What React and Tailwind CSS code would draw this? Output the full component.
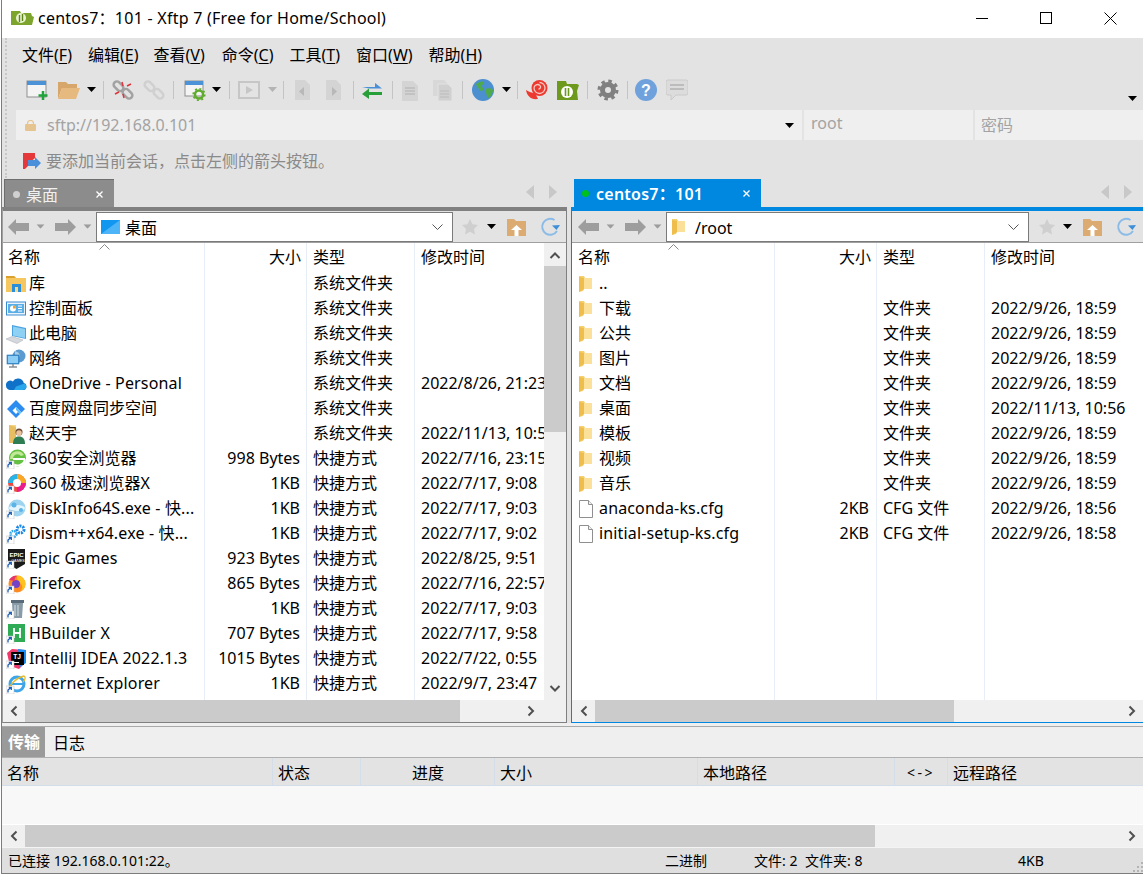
import React from 'react';

const leftRows = [
  { icon: 'library', name: '库', size: '', type: '系统文件夹', time: '' },
  { icon: 'panel', name: '控制面板', size: '', type: '系统文件夹', time: '' },
  { icon: 'pc', name: '此电脑', size: '', type: '系统文件夹', time: '' },
  { icon: 'network', name: '网络', size: '', type: '系统文件夹', time: '' },
  { icon: 'onedrive', name: 'OneDrive - Personal', size: '', type: '系统文件夹', time: '2022/8/26, 21:23' },
  { icon: 'baidu', name: '百度网盘同步空间', size: '', type: '系统文件夹', time: '' },
  { icon: 'user', name: '赵天宇', size: '', type: '系统文件夹', time: '2022/11/13, 10:56' },
  { icon: 'b360', name: '360安全浏览器', size: '998 Bytes', type: '快捷方式', time: '2022/7/16, 23:15' },
  { icon: 'x360', name: '360 极速浏览器X', size: '1KB', type: '快捷方式', time: '2022/7/17, 9:08' },
  { icon: 'disk', name: 'DiskInfo64S.exe - 快...', size: '1KB', type: '快捷方式', time: '2022/7/17, 9:03' },
  { icon: 'dism', name: 'Dism++x64.exe - 快...', size: '1KB', type: '快捷方式', time: '2022/7/17, 9:02' },
  { icon: 'epic', name: 'Epic Games', size: '923 Bytes', type: '快捷方式', time: '2022/8/25, 9:51' },
  { icon: 'firefox', name: 'Firefox', size: '865 Bytes', type: '快捷方式', time: '2022/7/16, 22:57' },
  { icon: 'geek', name: 'geek', size: '1KB', type: '快捷方式', time: '2022/7/17, 9:03' },
  { icon: 'hbuilder', name: 'HBuilder X', size: '707 Bytes', type: '快捷方式', time: '2022/7/17, 9:58' },
  { icon: 'idea', name: 'IntelliJ IDEA 2022.1.3', size: '1015 Bytes', type: '快捷方式', time: '2022/7/22, 0:55' },
  { icon: 'ie', name: 'Internet Explorer', size: '1KB', type: '快捷方式', time: '2022/9/7, 23:47' },
  { icon: 'purple', name: '', size: '', type: '', time: '' },
];

const rightRows = [
  { icon: 'folder', name: '..', size: '', type: '', time: '' },
  { icon: 'folder', name: '下载', size: '', type: '文件夹', time: '2022/9/26, 18:59' },
  { icon: 'folder', name: '公共', size: '', type: '文件夹', time: '2022/9/26, 18:59' },
  { icon: 'folder', name: '图片', size: '', type: '文件夹', time: '2022/9/26, 18:59' },
  { icon: 'folder', name: '文档', size: '', type: '文件夹', time: '2022/9/26, 18:59' },
  { icon: 'folder', name: '桌面', size: '', type: '文件夹', time: '2022/11/13, 10:56' },
  { icon: 'folder', name: '模板', size: '', type: '文件夹', time: '2022/9/26, 18:59' },
  { icon: 'folder', name: '视频', size: '', type: '文件夹', time: '2022/9/26, 18:59' },
  { icon: 'folder', name: '音乐', size: '', type: '文件夹', time: '2022/9/26, 18:59' },
  { icon: 'file', name: 'anaconda-ks.cfg', size: '2KB', type: 'CFG 文件', time: '2022/9/26, 18:56' },
  { icon: 'file', name: 'initial-setup-ks.cfg', size: '2KB', type: 'CFG 文件', time: '2022/9/26, 18:58' },
];

const Ic = ({ w = 22, h = 22, vb = '0 0 22 22', className = '', children }) => (
  <svg width={w} height={h} viewBox={vb} className={`shrink-0 ${className}`}>{children}</svg>
);

const Caret = ({ className = '', color = '#000' }) => (
  <svg width="9" height="5" viewBox="0 0 9 5" className={`shrink-0 ${className}`}><path d="M0 0h9L4.500 5z" fill={color} /></svg>
);

const Sep = ({ className = '' }) => <div className={`w-px h-[18px] bg-[#c4c4c4] shrink-0 ${className}`} />;

const Chevron = ({ dir, className = '' }) => (
  <svg width="10" height="12" viewBox="0 0 10 12" className={`shrink-0 ${className}`}>
    {dir === 'left' && <path d="M7.500 1.500 3 6l4.500 4.500" fill="none" stroke="#505050" strokeWidth="2" />}
    {dir === 'right' && <path d="M2.500 1.500 7 6l-4.500 4.500" fill="none" stroke="#505050" strokeWidth="2" />}
  </svg>
);

const Shortcut = () => (
  <g>
    <rect x="0" y="12" width="8" height="8" fill="#fff" stroke="#bbb" strokeWidth="0.5" />
    <path d="M2 18.500v-2.500l2.500-2 M2.800 13.500h2.500v2.500" fill="none" stroke="#1e5fb8" strokeWidth="1.300" />
  </g>
);

// file list icons
const RowIcon = ({ kind }) => {
  const box = { w: 20, h: 20, vb: '0 0 20 20' };
  switch (kind) {
    case 'library':
      return <Ic {...box}><path d="M0 2h8l2 2h10v14H0z" fill="#f6c75f" /><path d="M0 2h8l2 2H0z" fill="#dca02c" /><rect x="6" y="10" width="9" height="8" fill="#2a8fd8" /><rect x="9" y="13" width="3" height="5" fill="#f6d98a" /></Ic>;
    case 'panel':
      return <Ic {...box}><rect x="0.500" y="3" width="19" height="13" fill="#eaf3fb" stroke="#3a8ccf" /><rect x="2" y="5" width="16" height="9" fill="#5aaee6" /><circle cx="7" cy="9.500" r="3" fill="#fff" /><path d="M7 9.500V6.500a3 3 0 0 1 3 3z" fill="#f0a030" /><path d="M12 7h4M12 9.500h4M12 12h4" stroke="#fff" /></Ic>;
    case 'pc':
      return <Ic {...box}><path d="M6 1l14 3v11L6 12z" fill="#4aa3df" /><path d="M7 2.500l12 2.500v9L7 11.500z" fill="#8fd0f5" /><path d="M0 15l6-2.500 11 3.500-6 3.500z" fill="#d5d8dc" stroke="#a8abb0" strokeWidth="0.500" /></Ic>;
    case 'network':
      return <Ic {...box}><circle cx="13" cy="7" r="6.500" fill="#5b9bd0" /><path d="M9 2c3 1 6 3 4 6s-3 2-4-1z" fill="#a8cde8" /><rect x="1" y="6" width="12" height="9" fill="#3f95d8" stroke="#2b72ad" strokeWidth="0.600" /><rect x="2" y="7" width="10" height="7" fill="#8ccdf5" /><path d="M3 18h8M7 15v3" stroke="#8a8f94" strokeWidth="1.500" /></Ic>;
    case 'onedrive':
      return <Ic {...box} w={21} vb="0 0 21 20"><path d="M4.500 16h12.500a3.500 3.500 0 0 0 .8-6.900 6 6 0 0 0-11-1.600A4.300 4.300 0 0 0 0 11.700 4.300 4.300 0 0 0 4.500 16z" fill="#1071c8" /><path d="M8 16h9a3.500 3.500 0 0 0 1.500-6.600l-8.500 3z" fill="#28a8ea" /></Ic>;
    case 'baidu':
      return <Ic {...box}><path d="M10 1l9 9-3.500 3.500L10 8l-3.500 3.500 3.500 3.500 2-2 2 2-4 4L1 10z" fill="#2c8cf0" /><path d="M10 8l5.500 5.500L14 15l-4-4z" fill="#60c0f5" /></Ic>;
    case 'user':
      return <Ic {...box}><path d="M3 1h7v18H3z" fill="#f6d78a" /><path d="M3 1l7 2v16H3z" fill="#e7bf62" /><circle cx="13" cy="8" r="3.500" fill="#6b4a32" /><circle cx="13" cy="9" r="2.800" fill="#eac29c" /><path d="M7 20c0-6 3-7.500 6-7.500s6 1.500 6 7.500z" fill="#2f7d52" /></Ic>;
    case 'b360':
      return <Ic {...box}><circle cx="11.500" cy="9" r="8.500" fill="#64c040" /><path d="M4 10a7.500 7.500 0 0 1 14-4l-3 1a4.500 4.500 0 0 0-8 3z" fill="#c4e89a" /><path d="M7 10h12M19 10a7.500 7.500 0 0 1-13 4" stroke="#fff" strokeWidth="2" fill="none" /><Shortcut /></Ic>;
    case 'x360':
      return <Ic {...box}><circle cx="11" cy="9" r="9" fill="#f0483e" /><path d="M11 0a9 9 0 0 1 9 9h-9z" fill="#f9a825" /><path d="M20 9a9 9 0 0 1-9 9V9z" fill="#e91e8c" /><path d="M2 9a9 9 0 0 1 9-9v9z" fill="#27b5e8" /><circle cx="11" cy="9" r="4" fill="#fff" /><Shortcut /></Ic>;
    case 'disk':
      return <Ic {...box}><circle cx="11" cy="9" r="8.500" fill="#9fd4f0" /><ellipse cx="11" cy="9" rx="8" ry="3" fill="#e5f5fd" /><circle cx="8" cy="6" r="2.500" fill="#5ab4e5" /><circle cx="15" cy="11" r="2" fill="#5ab4e5" /><Shortcut /></Ic>;
    case 'dism':
      return <Ic {...box}><circle cx="14.500" cy="5.500" r="3.500" fill="none" stroke="#1e88e5" strokeWidth="3" strokeDasharray="2 1" /><circle cx="7.500" cy="10" r="3" fill="none" stroke="#29a5ee" strokeWidth="2.500" strokeDasharray="1.600 .8" /><Shortcut /></Ic>;
    case 'epic':
      return <Ic {...box}><path d="M2 0h17v15l-8.500 5L2 15z" fill="#1a1a1a" /><text x="10.500" y="7.500" textAnchor="middle" fontSize="6" fontWeight="700" fill="#fff" fontFamily="'Liberation Sans',sans-serif">EPIC</text><text x="12" y="12.500" textAnchor="middle" fontSize="3.800" fill="#fff" fontFamily="'Liberation Sans',sans-serif">GAMES</text><Shortcut /></Ic>;
    case 'firefox':
      return <Ic {...box}><circle cx="11" cy="10" r="8.500" fill="#ff8a1f" /><path d="M11 1.500a8.500 8.500 0 0 1 8.500 8.500c0 3-2 6-5 7 3-3 2-8-3-9z" fill="#ffc21f" /><circle cx="10" cy="10" r="4" fill="#7442c8" /><path d="M3 6c2-3 5-5 8-4-2 1-3 3-2 5z" fill="#e5356f" /><Shortcut /></Ic>;
    case 'geek':
      return <Ic {...box}><path d="M6 4h11l-1 15H7z" fill="#8a9ba8" /><rect x="5" y="1" width="13" height="3" fill="#5a6c7a" /><path d="M9 6v11M12 6v11" stroke="#d7e3ea" /><Shortcut /></Ic>;
    case 'hbuilder':
      return <Ic {...box}><path d="M2 0h17v18H2z" fill="#2faa55" /><path d="M8 4v10M14 4v10M8 9h6" stroke="#fff" strokeWidth="1.800" /><Shortcut /></Ic>;
    case 'idea':
      return <Ic {...box}><path d="M1 4l5-4 13 1v13l-6 6-9-3z" fill="#f0386b" /><path d="M12 0l8 1v13l-6 4z" fill="#1c8ef0" /><rect x="5" y="3" width="13" height="13" fill="#000" /><path d="M7 13.500h6" stroke="#fff" /><text x="11" y="10" textAnchor="middle" fontSize="6.500" fontWeight="700" fill="#fff" fontFamily="'Liberation Sans',sans-serif">TJ</text><Shortcut /></Ic>;
    case 'ie':
      return <Ic {...box}><circle cx="11" cy="10" r="7" fill="none" stroke="#3ea6e8" strokeWidth="3" /><path d="M5 10h12" stroke="#3ea6e8" strokeWidth="2" /><path d="M3 17c-2-3 6-13 15-15 2 1 1 4-1 6" fill="none" stroke="#e8bb2c" strokeWidth="1.300" /><Shortcut /></Ic>;
    case 'purple':
      return <Ic {...box}><rect x="0" y="1" width="19" height="18" fill="#5a2fc2" /></Ic>;
    case 'folder':
      return <Ic w={16} h={20} vb="0 0 16 20"><path d="M1 2h5l1 2h6v11H6l-1 2-4 1z" fill="#f5d06f" /><path d="M6 4h8v11H6z" fill="#fbe09a" /><path d="M1 3l5 1v11l-5 3z" fill="#eebd4c" /></Ic>;
    case 'file':
      return <Ic w={16} h={20} vb="0 0 16 20"><path d="M1.500 1.500h9l4 4v13h-13z" fill="#fff" stroke="#8f8f8f" /><path d="M10.500 1.500v4h4" fill="#f0f0f0" stroke="#8f8f8f" /></Ic>;
    default:
      return null;
  }
};

const GrayArrow = ({ dir, color = '#9d9d9d' }) => (
  <svg width="21" height="16" viewBox="0 0 21 16" className="shrink-0">
    <path d={dir === 'left' ? 'M0 8l8-8v4h13v8H8v4z' : 'M21 8l-8-8v4H0v8h13v4z'} fill={color} />
  </svg>
);

const Star = () => (
  <Ic w={18} h={18} vb="0 0 18 18"><path d="M9 1l2.500 5.300 5.500.7-4 3.900 1 5.600L9 13.800 4 16.500l1-5.600-4-3.900 5.500-.7z" fill="#cfcfcf" /></Ic>
);

const FolderUp = () => (
  <Ic w={21} h={20} vb="0 0 21 20"><path d="M1 2h7l2 2h10v15H1z" fill="#dcab72" /><path d="M10.500 8l5.500 5h-3.500v6h-4v-6H5z" fill="#fff" /></Ic>
);

const Refresh = () => (
  <Ic w={22} h={22} vb="0 0 22 22"><path d="M18 15a8 8 0 1 1-2.500-11" fill="none" stroke="#8bbce8" strokeWidth="2" /><path d="M21 9l-3.500 5L13 9.500z" fill="#3f8fd8" /></Ic>
);

const PaneToolbar = ({ path, pathIcon, comboWidth, pad, gapStar, gapCaret, gapFolder, gapRefresh }) => (
  <div className={`flex items-center h-[31px] bg-[#e3e3e3] shrink-0 ${pad}`}>
    <GrayArrow dir="left" />
    <Caret className="ml-[7px] scale-90" color="#9d9d9d" />
    <div className="ml-[10px]"><GrayArrow dir="right" /></div>
    <Caret className="ml-[7px] scale-90" color="#9d9d9d" />
    <div className={`${comboWidth} ml-[4px] h-[30px] bg-white border border-[#7a7a7a] flex items-center pl-[4px] pr-[9px] shrink-0`}>
      {pathIcon}
      <span className="flex-1 pt-[2px] text-black">{path}</span>
      <svg width="11" height="6" viewBox="0 0 11 6"><path d="M.5.5l5 5 5-5" fill="none" stroke="#555" /></svg>
    </div>
    <div className={gapStar}><Star /></div>
    <Caret className={gapCaret} />
    <div className={gapFolder}><FolderUp /></div>
    <div className={gapRefresh}><Refresh /></div>
  </div>
);

const ListHeader = ({ nameCol, namePad }) => (
  <div className="relative flex h-[28px] shrink-0 bg-white text-black">
    <svg width="11" height="6" viewBox="0 0 11 6" className="absolute left-[96px] top-[1px]"><path d="M.5 5.500l5-5 5 5" fill="none" stroke="#8a8a8a" /></svg>
    <div className={`${nameCol} ${namePad} shrink-0 leading-[29px] border-r border-[#e8eef7]`}>名称</div>
    <div className="w-[102px] shrink-0 pr-[5px] text-right leading-[29px] border-r border-[#e8eef7]">大小</div>
    <div className="w-[108px] shrink-0 pl-[6px] leading-[29px] border-r border-[#e8eef7]">类型</div>
    <div className="flex-1 pl-[6px] leading-[29px] whitespace-nowrap overflow-hidden">修改时间</div>
  </div>
);

const FileRow = ({ row, right }) => {
  const latin = /^[A-Za-z]/.test(row.name);
  return (
    <div className="flex h-[25px] shrink-0 leading-[25px] text-black">
      <div className={`${right ? 'w-[203px]' : 'w-[202px]'} shrink-0 flex items-center border-r border-[#e8eef7] overflow-hidden whitespace-nowrap`}>
        <div className={right ? 'ml-[6px] w-[21px] flex' : 'ml-[3px] w-[22px] flex'}><RowIcon kind={row.icon} /></div>
        <span className={`${right ? '' : 'ml-[1px]'} ${latin ? 'tracking-[0.15px]' : ''}`}>{row.name}</span>
      </div>
      <div className={`w-[102px] shrink-0 ${right ? 'pr-[7px]' : 'pr-[6px]'} text-right whitespace-nowrap border-r border-[#e8eef7]`}>{row.size}</div>
      <div className="w-[108px] shrink-0 pl-[6px] whitespace-nowrap border-r border-[#e8eef7]">{row.type}</div>
      <div className="flex-1 pl-[6px] whitespace-nowrap overflow-hidden">{row.time}</div>
    </div>
  );
};

const HScroll = ({ thumb, start = 'w-[23px]', end = 'w-[22px]' }) => (
  <div className="flex h-[22px] bg-[#f0f0f0] items-center shrink-0">
    <div className={`${start} flex justify-center shrink-0`}><Chevron dir="left" /></div>
    <div className={`${thumb} h-full bg-[#cbcbcb] shrink-0`} />
    <div className="flex-1" />
    <div className={`${end} flex justify-center shrink-0`}><Chevron dir="right" /></div>
  </div>
);

const VScroll = () => (
  <div className="w-[22px] shrink-0 bg-[#f0f0f0] flex flex-col">
    <div className="h-[23px] flex items-center justify-center">
      <svg width="12" height="8" viewBox="0 0 12 8"><path d="M1.500 7 6 2.500 10.500 7" fill="none" stroke="#505050" strokeWidth="2" /></svg>
    </div>
    <div className="h-[166px] bg-[#cbcbcb]" />
    <div className="flex-1" />
    <div className="h-[23px] flex items-center justify-center">
      <svg width="12" height="8" viewBox="0 0 12 8"><path d="M1.500 1 6 5.500 10.500 1" fill="none" stroke="#505050" strokeWidth="2" /></svg>
    </div>
  </div>
);

const MenuItem = ({ label, k, className = '' }) => (
  <span className={`whitespace-nowrap ${className}`}>{label}(<span className="underline underline-offset-2">{k}</span>)</span>
);

const TabArrows = () => (
  <div className="flex items-center gap-[15px]">
    <svg width="8" height="14" viewBox="0 0 8 14"><path d="M8 0v14L0 7z" fill="#c8c8c8" /></svg>
    <svg width="8" height="14" viewBox="0 0 8 14"><path d="M0 0v14l8-7z" fill="#c8c8c8" /></svg>
  </div>
);

const TabClose = () => (
  <svg width="7" height="7" viewBox="0 0 7 7" className="shrink-0"><path d="M.5.5l6 6M6.500.5l-6 6" stroke="#fff" strokeWidth="1.300" /></svg>
);

const Link = ({ color, width = 2.5 }) => (
  <g fill="none" stroke={color} strokeWidth={width}>
    <rect x="1" y="4" width="11" height="6.500" rx="3.200" transform="rotate(45 6.500 7.250)" />
    <rect x="10" y="11.500" width="11" height="6.500" rx="3.200" transform="rotate(45 15.500 14.750)" />
  </g>
);

const Toolbar = () => (
  <div className="flex items-center h-[38px] shrink-0 pl-[18px] pb-[3px]">
    {/* new session */}
    <Ic>
      <rect x="1" y="2" width="19" height="16" fill="#f4f4f4" stroke="#8f8f8f" /><rect x="1" y="2" width="19" height="4" fill="#4b92d6" />
      <path d="M17 12v9M12.500 16.500h9" stroke="#1fa33a" strokeWidth="2.500" />
    </Ic>
    <Ic className="ml-[10px]">
      <path d="M0 3h8l2 2h9v4H4L0 20z" fill="#d6a66a" /><path d="M4 9h18l-4 11H0z" fill="#e6b97f" />
    </Ic>
    <Caret className="ml-[7px]" />
    <Sep className="ml-[7px]" />
    <Ic className="ml-[8px]">
      <Link color="#a2a2a2" />
      <path d="M10 3l1 4M15 7l4-2M3 15l4-2M11 15l1 4" stroke="#e0343c" strokeWidth="1.500" />
    </Ic>
    <Ic className="ml-[9px]"><Link color="#d0d0d0" /></Ic>
    <Sep className="ml-[8px]" />
    <Ic className="ml-[10px]">
      <rect x="1" y="2" width="18" height="15" fill="#f4f4f4" stroke="#8f8f8f" /><rect x="1" y="2" width="18" height="4" fill="#4b92d6" />
      <circle cx="15" cy="15.500" r="4" fill="none" stroke="#5eab2e" strokeWidth="2.500" /><circle cx="15" cy="15.500" r="5.800" fill="none" stroke="#5eab2e" strokeWidth="1.600" strokeDasharray="2 2.500" />
    </Ic>
    <Caret className="ml-[6px]" />
    <Sep className="ml-[8px]" />
    <Ic className="ml-[8px]">
      <rect x="1" y="3" width="20" height="16" fill="none" stroke="#c6c6c6" strokeWidth="2" /><path d="M8 7l7 4-7 4z" fill="#c6c6c6" />
    </Ic>
    <Caret className="ml-[8px]" color="#b4b4b4" />
    <Sep className="ml-[6px]" />
    <Ic className="ml-[8px]">
      <path d="M3 1h10l5 5v15H3z" fill="#d4d4d4" /><path d="M12 8l-5 4.500 5 4.500z" fill="#b8b8b8" />
    </Ic>
    <Ic className="ml-[9px]">
      <path d="M3 1h10l5 5v15H3z" fill="#d4d4d4" /><path d="M9 8l5 4.500-5 4.500z" fill="#b8b8b8" />
    </Ic>
    <Sep className="ml-[8px]" />
    <Ic className="ml-[7px]">
      <path d="M1 8h13V4l7 5.500H8z" fill="#4b8fd8" /><path d="M21 13H8V9.500L1 15l7 5v-4h13z" fill="#27a03a" />
    </Ic>
    <Sep className="ml-[9px]" />
    <Ic className="ml-[7px]">
      <path d="M2 2h11l5 5v15H2z" fill="#d4d4d4" /><path d="M5 9h10M5 12h10M5 15h10" stroke="#bcbcbc" strokeWidth="1.300" />
    </Ic>
    <Ic className="ml-[10px]">
      <path d="M1 1h11l4 4v12H1z" fill="#d8d8d8" /><path d="M6 5h10l4 4v13H6z" fill="#d0d0d0" stroke="#e3e3e3" /><path d="M8 12h9M8 15h9M8 18h9" stroke="#bcbcbc" strokeWidth="1.200" />
    </Ic>
    <Sep className="ml-[8px]" />
    <Ic className="ml-[9px]">
      <circle cx="11" cy="11" r="11" fill="#4c8fd0" /><path d="M4 5c3-2 6-3 8-2 1 2-2 2-2 4s2 2 1 4-3 1-4-1-2-2-3-5zM13 10c3-1 6-1 8 1 0 3-2 6-4 8-3-1-2-4-3-5z" fill="#4faa4a" />
    </Ic>
    <Caret className="ml-[8px]" />
    <Sep className="ml-[6px]" />
    <Ic className="ml-[8px]">
      <circle cx="13.500" cy="9" r="8" fill="#ec3a30" /><path d="M0 11c3 2 6 3 9 3l3 6c-7 1-11-3-12-9z" fill="#ec3a30" />
      <path d="M13.500 3.500a5.500 5.500 0 1 1-5.500 5.500 3.500 3.500 0 0 1 6-2.400 2 2 0 0 1-1.500 3.400" fill="none" stroke="#f6c9c3" strokeWidth="1.300" />
    </Ic>
    <Ic className="ml-[9px]">
      <path d="M0 2h9l1 3h10l2 1-2 6 1 9H0z" fill="#6d9a1c" /><circle cx="10" cy="13" r="6" fill="#fff" /><path d="M8.500 9v8M11.500 17V9" stroke="#6d9a1c" strokeWidth="1.600" />
    </Ic>
    <Sep className="ml-[8px]" />
    <Ic className="ml-[9px]">
      <circle cx="11" cy="11" r="5.500" fill="none" stroke="#808080" strokeWidth="5" /><circle cx="11" cy="11" r="9" fill="none" stroke="#808080" strokeWidth="3" strokeDasharray="3.500 3.570" />
    </Ic>
    <Sep className="ml-[8px]" />
    <Ic className="ml-[7px]">
      <circle cx="11" cy="11" r="11" fill="#6fa2dc" /><text x="11" y="17" textAnchor="middle" fontSize="16" fontWeight="700" fill="#fff" fontFamily="'Liberation Sans',sans-serif">?</text>
    </Ic>
    <Ic className="ml-[9px]">
      <path d="M2 1h18a2 2 0 0 1 2 2v11a2 2 0 0 1-2 2H10l-5 5v-5H2a2 2 0 0 1-2-2V3a2 2 0 0 1 2-2z" fill="#dcdcdc" stroke="#cacaca" /><path d="M4 6h14M4 10h14" stroke="#bcbcbc" strokeWidth="2" />
    </Ic>
    <div className="flex-1 self-stretch flex items-end justify-end pr-[6px] pb-[6px]"><Caret /></div>
  </div>
);

export default function App() {
  return (
    <div className="w-[1143px] h-[875px] bg-white overflow-hidden pl-px font-['Noto_Sans','Noto_Sans_CJK_SC',sans-serif] text-[16px] text-[#111]">
      <div className="h-[874px] flex flex-col border-l border-b border-[#7c7c7c] bg-[#e3e3e3]">
        {/* title bar */}
        <div className="h-[38px] bg-white flex items-center shrink-0 pl-[9px] pb-[2px]">
          <Ic w={23} h={16} vb="0 0 23 16">
            <path d="M0 1h9l1 2h10l1 3 2 1-2 8H0z" fill="#7da42c" /><circle cx="10" cy="8" r="5" fill="#e9f3d3" /><path d="M8.500 5v7M11.500 11V4" stroke="#5d8414" strokeWidth="1.400" />
          </Ic>
          <span className="ml-[4px] whitespace-nowrap text-black tracking-[0.25px]">centos7：101 - Xftp 7 (Free for Home/School)</span>
          <div className="flex-1" />
          <div className="flex items-center">
            <div className="w-[12px] h-px bg-black" />
            <div className="ml-[52px] w-[12px] h-[12px] border border-black" />
            <svg width="13" height="13" viewBox="0 0 13 13" className="ml-[52px] mr-[26px]"><path d="M.5.5l12 12M12.500.5l-12 12" stroke="#000" /></svg>
          </div>
        </div>

        <div className="flex flex-col shrink-0 pl-[3px] bg-[#e3e3e3]">
          <div className="pl-[1px] border-l-2 border-dotted border-[#c8c8c8]">
            {/* menu */}
            <div className="h-[34px] flex items-center pl-[14px] shrink-0 text-black">
              <MenuItem label="文件" k="F" />
              <MenuItem label="编辑" k="E" className="ml-[16px]" />
              <MenuItem label="查看" k="V" className="ml-[15px]" />
              <MenuItem label="命令" k="C" className="ml-[17px]" />
              <MenuItem label="工具" k="T" className="ml-[16px]" />
              <MenuItem label="窗口" k="W" className="ml-[16px]" />
              <MenuItem label="帮助" k="H" className="ml-[16px]" />
            </div>
            <Toolbar />
            {/* address */}
            <div className="h-[30px] flex items-stretch gap-[2px] shrink-0 pl-[8px] text-[#a3a3a3]">
              <div className="w-[786px] bg-[#efefef] flex items-center pl-[9px] pr-[8px]">
                <svg width="11" height="11" viewBox="0 0 11 11" className="shrink-0"><path d="M2.500 5V3.500a3 3 0 0 1 6 0V5" fill="none" stroke="#e6c48f" strokeWidth="1.200" /><rect y="4" width="11" height="7" rx="1" fill="#e6c48f" /></svg>
                <span className="ml-[11px] flex-1">sftp://192.168.0.101</span>
                <Caret />
              </div>
              <div className="w-[169px] bg-[#efefef] pl-[7px] leading-[27px]">root</div>
              <div className="flex-1 bg-[#efefef] pl-[6px] leading-[30px]">密码</div>
            </div>
            {/* session hint */}
            <div className="h-[38px] flex items-center pl-[15px] pt-[4px] shrink-0 text-[#8a8a8a]">
              <svg width="18" height="17" viewBox="0 0 18 17" className="shrink-0"><path d="M0 0h12v5L6 10v2L2 16H0z" fill="#e5383b" /><path d="M18 10l-6-6v3H5v6h7v3z" fill="#4a8fd9" /></svg>
              <span className="ml-[5px]">要添加当前会话，点击左侧的箭头按钮。</span>
            </div>
          </div>
        </div>

        {/* tabs */}
        <div className="h-[29px] flex shrink-0 bg-[#e3e3e3]">
          <div className="w-[569px] flex items-end justify-between pl-[2px] pr-[14px] shrink-0">
            <div className="w-[110px] h-[28px] bg-[#8c8c8c] flex items-center pl-[9px] pr-[11px] pt-[3px] text-[#f0f0f0] shadow-[inset_0_1px_0_#6e6e6e,inset_1px_0_0_#6e6e6e]">
              <div className="w-[7px] h-[7px] rounded-full bg-[#d0d0d0] shrink-0" />
              <span className="ml-[6px] flex-1">桌面</span>
              <TabClose />
            </div>
            <div className="h-[28px] flex items-center pb-[3px]"><TabArrows /></div>
          </div>
          <div className="flex-1 flex items-end justify-between pl-[3px] pr-[11px]">
            <div className="w-[187px] h-[28px] bg-[#0087e0] flex items-center pl-[8px] pr-[11px] pt-px text-white font-semibold">
              <div className="w-[7px] h-[7px] rounded-full bg-[#00c01a] shrink-0" />
              <span className="ml-[7px] flex-1 whitespace-nowrap tracking-[0.25px]">centos7：101</span>
              <TabClose />
            </div>
            <div className="h-[28px] flex items-center pb-[3px]"><TabArrows /></div>
          </div>
        </div>

        {/* file panes */}
        <div className="h-[516px] flex shrink-0">
          <div className="w-[565px] shrink-0 flex flex-col border-t-[4px] border-x border-b border-[#808080] border-l-[#a0a0a0]">
            <PaneToolbar
              path="桌面"
              comboWidth="w-[357px]"
              pad="pl-[5px]"
              gapStar="ml-[8px]"
              gapCaret="ml-[8px]"
              gapFolder="ml-[10px]"
              gapRefresh="ml-[12px]"
              pathIcon={
                <svg width="19" height="14" viewBox="0 0 19 14" className="mr-[5px] shrink-0"><rect width="19" height="14" fill="#1297f0" /><path d="M0 14 19 0v14z" fill="#4db4f7" /></svg>
              }
            />
            <div className="flex-1 min-h-0 flex flex-col border-t border-[#a0a0a0] overflow-hidden">
              <div className="flex-1 min-h-0 flex">
                <div className="flex-1 min-w-0 bg-white flex flex-col overflow-hidden">
                  <ListHeader nameCol="w-[202px]" namePad="pl-[5px]" />
                  {leftRows.map((row, i) => <FileRow key={i} row={row} />)}
                </div>
                <VScroll />
              </div>
              <div className="flex">
                <div className="flex-1 min-w-0">
                  <HScroll thumb="w-[435px]" start="w-[22px]" end="w-[27px]" />
                </div>
                <div className="w-[22px] bg-[#f0f0f0]" />
              </div>
            </div>
          </div>
          <div className="w-[4px] shrink-0" />
          <div className="flex-1 min-w-0 flex flex-col border-t-[4px] border-l border-b border-[#0087e0]">
            <PaneToolbar
              path="/root"
              comboWidth="w-[363px]"
              pad="pl-[6px]"
              gapStar="ml-[9px]"
              gapCaret="ml-[7px]"
              gapFolder="ml-[10px]"
              gapRefresh="ml-[12px]"
              pathIcon={
                <div className="mr-[8px] flex"><RowIcon kind="folder" /></div>
              }
            />
            <div className="flex-1 min-h-0 flex flex-col border-t border-[#a0a0a0] overflow-hidden">
              <div className="flex-1 min-h-0 bg-white flex flex-col overflow-hidden">
                <ListHeader nameCol="w-[203px]" namePad="pl-[6px]" />
                {rightRows.map((row, i) => <FileRow key={i} row={row} right />)}
                <div className="flex-1 flex">
                  <div className="w-[203px] border-r border-[#e8eef7]" />
                  <div className="w-[102px] border-r border-[#e8eef7]" />
                  <div className="w-[108px] border-r border-[#e8eef7]" />
                </div>
              </div>
              <HScroll thumb="w-[359px]" />
            </div>
          </div>
        </div>

        {/* splitter */}
        <div className="h-[4px] shrink-0 bg-[#efefef] border-b border-[#a9a9a9]" />

        {/* transfer tabs */}
        <div className="h-[31px] flex shrink-0 bg-[#efefef] border-b border-[#b0b0b0]">
          <div className="w-[43px] bg-[#9a9a9a] text-white font-semibold pl-[6px] leading-[31px]">传输</div>
          <div className="pl-[8px] leading-[33px] text-black">日志</div>
        </div>
        <div className="h-[28px] flex shrink-0 bg-[#e3e3e3] border-b border-[#d3deea] leading-[30px] text-black">
          <div className="w-[271px] pl-[5px] border-r border-[#d3deea]">名称</div>
          <div className="w-[88px] pl-[5px] border-r border-[#d3deea]">状态</div>
          <div className="w-[134px] pr-[50px] text-right border-r border-[#d3deea]">进度</div>
          <div className="w-[203px] pl-[5px] border-r border-[#d3deea]">大小</div>
          <div className="w-[197px] pl-[5px] border-r border-[#d3deea]">本地路径</div>
          <div className="w-[53px] text-center border-r border-[#d3deea] text-[14px] tracking-[2.5px]">&lt;-&gt;</div>
          <div className="flex-1 pl-[5px]">远程路径</div>
        </div>
        <div className="h-[39px] shrink-0 bg-[#f8f8f8] border-b border-white" />
        <HScroll thumb="w-[850px]" />
        {/* status bar */}
        <div className="flex-1 min-h-0 flex items-center bg-[#dfdfdf] border-t border-[#f4f4f4] text-[14px] text-black whitespace-nowrap">
          <span className="ml-[6px] w-[657px] shrink-0">已连接 192.168.0.101:22。</span>
          <span className="w-[89px] shrink-0">二进制</span>
          <span className="w-[51px] shrink-0">文件: 2</span>
          <span className="w-[213px] shrink-0">文件夹: 8</span>
          <span>4KB</span>
          <div className="flex-1" />
          <svg width="10" height="10" viewBox="0 0 10 10" className="self-end mb-[1px] shrink-0">
            <path d="M8 0h2v2H8zM4 4h2v2H4zM8 4h2v2H8zM0 8h2v2H0zM4 8h2v2H4zM8 8h2v2H8z" fill="#b4b4b4" />
          </svg>
        </div>
      </div>
    </div>
  );
}
